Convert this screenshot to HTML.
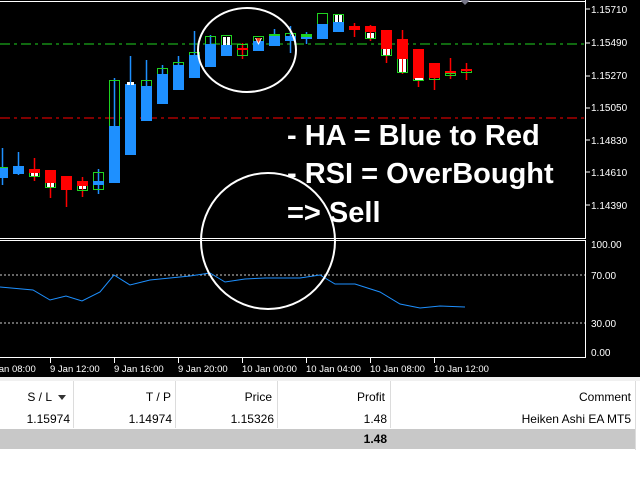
<!DOCTYPE html>
<html><head><meta charset="utf-8"><style>
body{margin:0;width:640px;height:480px;overflow:hidden;background:#fff;font-family:"Liberation Sans",sans-serif}
svg{position:absolute;left:0;top:0}
</style></head><body>
<svg width="640" height="480" xmlns="http://www.w3.org/2000/svg" font-family="Liberation Sans, sans-serif">
<rect x="0" y="0" width="640" height="377" fill="#000"/>
<rect x="0" y="377" width="640" height="4" fill="#f0f0f0"/>
<line x1="0" y1="1.5" x2="586" y2="1.5" stroke="#fff"/>
<line x1="585.5" y1="0" x2="585.5" y2="239" stroke="#fff"/>
<line x1="0" y1="238.5" x2="586" y2="238.5" stroke="#fff"/>
<line x1="0" y1="240.5" x2="586" y2="240.5" stroke="#fff"/>
<line x1="585.5" y1="240" x2="585.5" y2="358" stroke="#fff"/>
<line x1="0" y1="357.5" x2="586" y2="357.5" stroke="#fff"/>
<polygon points="460,0 470,0 465,5" fill="#778"/>
<g fill="#fff" font-size="10">
<text x="591" y="13">1.15710</text><text x="591" y="46">1.15490</text><text x="591" y="79">1.15270</text><text x="591" y="111">1.15050</text><text x="591" y="144">1.14830</text><text x="591" y="176">1.14610</text><text x="591" y="209">1.14390</text>
<text x="591" y="248">100.00</text><text x="591" y="279">70.00</text><text x="591" y="327">30.00</text><text x="591" y="356">0.00</text>
</g>
<g stroke="#fff"><line x1="586" y1="9" x2="590" y2="9"/><line x1="586" y1="43" x2="590" y2="43"/><line x1="586" y1="76" x2="590" y2="76"/><line x1="586" y1="108" x2="590" y2="108"/><line x1="586" y1="140" x2="590" y2="140"/><line x1="586" y1="172" x2="590" y2="172"/><line x1="586" y1="205" x2="590" y2="205"/></g>
<line x1="0" y1="44" x2="585" y2="44" stroke="#1fd21f" stroke-dasharray="10,4,3,4"/>
<line x1="0" y1="118" x2="585" y2="118" stroke="#f00" stroke-dasharray="10,4,3,4"/>
<line x1="0" y1="275" x2="585" y2="275" stroke="#ccc" stroke-dasharray="2,2"/>
<line x1="0" y1="323" x2="585" y2="323" stroke="#ccc" stroke-dasharray="2,2"/>
<g stroke-width="1.5">
<line x1="2.5" y1="148" x2="2.5" y2="185" stroke="#1e90ff"/>
<line x1="18.5" y1="152" x2="18.5" y2="175" stroke="#1e90ff"/>
<line x1="34.5" y1="158" x2="34.5" y2="181" stroke="#f00"/>
<line x1="50.5" y1="170" x2="50.5" y2="198" stroke="#f00"/>
<line x1="66.5" y1="176" x2="66.5" y2="207" stroke="#f00"/>
<line x1="82.5" y1="177" x2="82.5" y2="197" stroke="#f00"/>
<line x1="98.5" y1="169" x2="98.5" y2="194" stroke="#1e90ff"/>
<line x1="114.5" y1="78" x2="114.5" y2="183" stroke="#1e90ff"/>
<line x1="130.5" y1="56" x2="130.5" y2="155" stroke="#1e90ff"/>
<line x1="146.5" y1="60" x2="146.5" y2="121" stroke="#1e90ff"/>
<line x1="162.5" y1="65" x2="162.5" y2="104" stroke="#1e90ff"/>
<line x1="178.5" y1="56" x2="178.5" y2="90" stroke="#1e90ff"/>
<line x1="194.5" y1="31" x2="194.5" y2="78" stroke="#1e90ff"/>
<line x1="210.5" y1="35" x2="210.5" y2="67" stroke="#1e90ff"/>
<line x1="242.5" y1="43" x2="242.5" y2="59" stroke="#f00"/>
<line x1="274.5" y1="29" x2="274.5" y2="46" stroke="#1e90ff"/>
<line x1="290.5" y1="26" x2="290.5" y2="53" stroke="#1e90ff"/>
<line x1="306.5" y1="32" x2="306.5" y2="44" stroke="#1e90ff"/>
<line x1="354.5" y1="23" x2="354.5" y2="37" stroke="#f00"/>
<line x1="370.5" y1="25" x2="370.5" y2="41" stroke="#f00"/>
<line x1="386.5" y1="30" x2="386.5" y2="63" stroke="#f00"/>
<line x1="402.5" y1="30" x2="402.5" y2="74" stroke="#f00"/>
<line x1="418.5" y1="49" x2="418.5" y2="87" stroke="#f00"/>
<line x1="434.5" y1="63" x2="434.5" y2="90" stroke="#f00"/>
<line x1="450.5" y1="58" x2="450.5" y2="79" stroke="#f00"/>
<line x1="466.5" y1="63" x2="466.5" y2="80" stroke="#f00"/>
</g>
<g fill="none" stroke="#1fd21f">
<rect x="0.5" y="167.5" width="7" height="10"/>
<rect x="29.5" y="169.5" width="10" height="7"/>
<rect x="45.5" y="182.5" width="10" height="5"/>
<rect x="77.5" y="181.5" width="10" height="9"/>
<rect x="93.5" y="172.5" width="10" height="17"/>
<rect x="109.5" y="80.5" width="10" height="102"/>
<rect x="141.5" y="80.5" width="10" height="10"/>
<rect x="157.5" y="68.5" width="10" height="8"/>
<rect x="173.5" y="62.5" width="10" height="6"/>
<rect x="189.5" y="52.5" width="10" height="5"/>
<rect x="205.5" y="36.5" width="10" height="10"/>
<rect x="221.5" y="35.5" width="10" height="10"/>
<rect x="237.5" y="44.5" width="10" height="11"/>
<rect x="253.5" y="36.5" width="10" height="6"/>
<rect x="285.5" y="33.5" width="10" height="7"/>
<rect x="317.5" y="13.5" width="10" height="12"/>
<rect x="333.5" y="14.5" width="10" height="8"/>
<rect x="365.5" y="26.5" width="10" height="12"/>
<rect x="381.5" y="48.5" width="10" height="7"/>
<rect x="397.5" y="58.5" width="10" height="14"/>
<rect x="413.5" y="77.5" width="10" height="3"/>
<rect x="429.5" y="77.5" width="10" height="2"/>
<rect x="445.5" y="73.5" width="10" height="2"/>
<rect x="461.5" y="69.5" width="10" height="3"/>
</g>
<g fill="#1e90ff">
<rect x="0" y="168" width="8" height="10"/>
<rect x="13" y="166" width="11" height="8"/>
<rect x="93" y="181" width="11" height="4"/>
<rect x="109" y="126" width="11" height="57"/>
<rect x="125" y="84" width="11" height="71"/>
<rect x="141" y="86" width="11" height="35"/>
<rect x="157" y="74" width="11" height="30"/>
<rect x="173" y="65" width="11" height="25"/>
<rect x="189" y="55" width="11" height="23"/>
<rect x="205" y="44" width="11" height="23"/>
<rect x="221" y="45" width="11" height="11"/>
<rect x="253" y="41" width="11" height="10"/>
<rect x="269" y="34" width="11" height="12"/>
<rect x="285" y="36" width="11" height="5"/>
<rect x="301" y="35" width="11" height="4"/>
<rect x="317" y="24" width="11" height="15"/>
<rect x="333" y="22" width="11" height="10"/>
</g>
<g fill="#1fd21f"><rect x="269" y="34" width="11" height="2"/><rect x="301" y="34" width="11" height="3"/></g>
<g fill="#f00">
<rect x="29" y="169" width="11" height="4"/>
<rect x="45" y="170" width="11" height="13"/>
<rect x="61" y="176" width="11" height="14"/>
<rect x="77" y="181" width="11" height="5"/>
<rect x="237" y="48" width="11" height="2"/>
<rect x="349" y="26" width="11" height="4"/>
<rect x="365" y="26" width="11" height="6"/>
<rect x="381" y="30" width="11" height="19"/>
<rect x="397" y="39" width="11" height="20"/>
<rect x="413" y="49" width="11" height="30"/>
<rect x="429" y="63" width="11" height="15"/>
<rect x="445" y="71" width="11" height="2"/>
<rect x="461" y="69" width="11" height="2"/>
</g>
<g fill="#fff">
<rect x="31" y="173" width="3" height="3"/><rect x="35" y="173" width="3" height="3"/>
<rect x="47" y="183" width="3" height="4"/><rect x="51" y="183" width="3" height="4"/>
<rect x="79" y="186" width="3" height="3"/><rect x="83" y="186" width="3" height="3"/>
<rect x="127" y="82" width="3" height="3"/><rect x="131" y="82" width="3" height="3"/>
<rect x="223" y="37" width="3" height="8"/><rect x="227" y="37" width="3" height="8"/>
<rect x="335" y="15" width="3" height="7"/><rect x="339" y="15" width="3" height="7"/>
<rect x="367" y="33" width="3" height="5"/><rect x="371" y="33" width="3" height="5"/>
<rect x="383" y="49" width="3" height="6"/><rect x="387" y="49" width="3" height="6"/>
<rect x="399" y="59" width="3" height="13"/><rect x="403" y="59" width="3" height="13"/>
<rect x="415" y="78" width="8" height="2"/>
</g>
<polygon points="255,38 262,38 258.5,45" fill="#fff"/>
<polygon points="256,38 261,38 258.5,43" fill="#f04020"/>
<polyline fill="none" stroke="#1e90ff" points="0,287 33,290 50,300 66,296 82,301 100,292 114,275 130,285 150,280 170,278 190,276 210,273 225,282 245,279 265,278 300,278 320,275 335,284 355,284 380,292 400,304 420,308 440,306 465,307"/>
<ellipse cx="247" cy="50" rx="49" ry="42" fill="none" stroke="#fff" stroke-width="2"/>
<ellipse cx="268" cy="241" rx="67" ry="68" fill="none" stroke="#fff" stroke-width="2"/>
<g fill="#fff" font-size="29" font-weight="bold">
<text x="287" y="145">- HA = Blue to Red</text>
<text x="287" y="183">- RSI = OverBought</text>
<text x="287" y="222">=&gt; Sell</text>
</g>
<g stroke="#fff"><line x1="50.5" y1="358" x2="50.5" y2="363"/><line x1="114.5" y1="358" x2="114.5" y2="363"/><line x1="178.5" y1="358" x2="178.5" y2="363"/><line x1="242.5" y1="358" x2="242.5" y2="363"/><line x1="306.5" y1="358" x2="306.5" y2="363"/><line x1="370.5" y1="358" x2="370.5" y2="363"/><line x1="434.5" y1="358" x2="434.5" y2="363"/></g>
<g fill="#fff" font-size="9.5">
<text x="-6" y="372">Jan 08:00</text><text x="50" y="372">9 Jan 12:00</text><text x="114" y="372">9 Jan 16:00</text><text x="178" y="372">9 Jan 20:00</text><text x="242" y="372">10 Jan 00:00</text><text x="306" y="372">10 Jan 04:00</text><text x="370" y="372">10 Jan 08:00</text><text x="434" y="372">10 Jan 12:00</text>
</g>
<rect x="0" y="381" width="636" height="27" fill="#fff"/>
<rect x="0" y="429" width="636" height="20" fill="#c8c8c8"/>
<g stroke="#dcdcdc"><line x1="73.5" y1="381" x2="73.5" y2="428"/><line x1="175.5" y1="381" x2="175.5" y2="428"/><line x1="277.5" y1="381" x2="277.5" y2="428"/><line x1="390.5" y1="381" x2="390.5" y2="428"/><line x1="635.5" y1="381" x2="635.5" y2="450"/></g>
<g font-size="12" fill="#000" text-anchor="end">
<text x="52" y="401">S / L</text><text x="171" y="401">T / P</text><text x="272" y="401">Price</text><text x="385" y="401">Profit</text><text x="631" y="401">Comment</text>
<text x="70" y="423">1.15974</text><text x="172" y="423">1.14974</text><text x="274" y="423">1.15326</text><text x="387" y="423">1.48</text><text x="631" y="423">Heiken Ashi EA MT5</text>
<text x="387" y="443" font-weight="bold">1.48</text>
</g>
<polygon points="58,395 66,395 62,400" fill="#333"/>
</svg>
</body></html>
